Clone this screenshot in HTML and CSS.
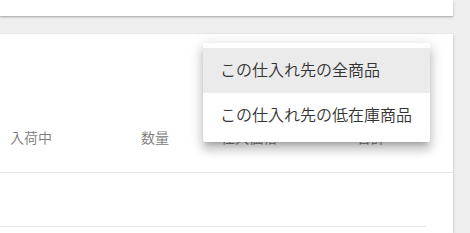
FILE: index.html
```html
<!DOCTYPE html>
<html lang="ja">
<head>
    <meta charset="UTF-8">
    <meta name="viewport" content="width=device-width, initial-scale=1.0">
    <title>仕入れ先</title>
    <link rel="stylesheet" href="styles.css">
</head>
<body>
    <div class="page">
        <div class="card card-top"></div>

        <div class="card card-main">
            <div class="toolbar"></div>

            <div class="table-head">
                <span>入荷中</span>
                <span>数量</span>
                <span>仕入価格</span>
                <span>合計</span>
            </div>
            <div class="table-row"></div>

            <!-- opened filter menu -->
            <div class="menu">
                <div class="menu-item active">この仕入れ先の全商品</div>
                <div class="menu-item">この仕入れ先の低在庫商品</div>
            </div>
        </div>
    </div>
</body>
</html>
```

FILE: styles.css
```css
* {
    margin: 0;
    padding: 0;
    box-sizing: border-box;
}

body {
    background: #efefef;
    font-family: Roboto, "Noto Sans CJK JP", sans-serif;
    font-weight: 350;
    color: rgba(0, 0, 0, 0.87);
    height: 233px;
    overflow: hidden;
}

.page {
    width: 453px;
    height: 233px;
    display: flex;
    flex-direction: column;
}

.card {
    background: white;
    box-shadow: 0 1px 3px rgba(0, 0, 0, 0.2), 0 1px 1px rgba(0, 0, 0, 0.12);
}

.card-top {
    height: 16px;
    margin-bottom: 18px;
}

.card-main {
    position: relative;
    flex: 1;
}

.toolbar {
    height: 83px;
}

.table-head {
    display: grid;
    grid-template-columns: 131px 80px 136px 1fr;
    align-items: end;
    height: 56px;
    padding: 0 0 24px 10px;
    border-bottom: 1px solid #e6e6e6;
    font-size: 14px;
    line-height: 20px;
    color: #7b7b7b;
}

.table-row {
    height: 54px;
    margin-right: 27px;
    border-bottom: 1px solid #e6e6e6;
}

.menu {
    position: absolute;
    top: 9px;
    left: 203px;
    width: 227px;
    padding: 5px 0 4px;
    background: white;
    border-radius: 2px;
    box-shadow: 0 5px 5px -3px rgba(0, 0, 0, 0.2), 0 8px 10px 1px rgba(0, 0, 0, 0.14), 0 3px 14px 2px rgba(0, 0, 0, 0.12);
}

.menu-item {
    height: 45px;
    line-height: 45px;
    padding-left: 17px;
    font-size: 16px;
    color: #333;
    white-space: nowrap;
}

.menu-item.active {
    background: #ebebeb;
}
```
